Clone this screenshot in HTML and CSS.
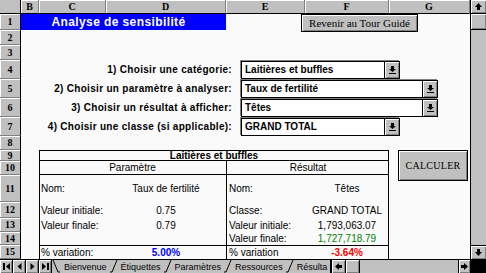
FILE: index.html
```html
<!DOCTYPE html>
<html lang="fr">
<head>
    <meta charset="UTF-8">
    <meta name="viewport" content="width=device-width, initial-scale=1.0">
    <title>Analyse de sensibilité</title>
    <link rel="stylesheet" href="styles.css">
</head>
<body>

<div class="window">
    <div class="main">
        <div class="sheet">
            <div class="corner"></div>
            <div class="col-heads">
                <div>B</div><div>C</div><div>D</div><div>E</div><div>F</div><div>G</div>
            </div>
            <div class="row-heads">
                <div>1</div><div>2</div><div>3</div><div>4</div><div>5</div>
                <div>6</div><div>7</div><div>8</div><div>9</div><div>10</div>
                <div>11</div><div>12</div><div>13</div><div>14</div><div>15</div>
            </div>

            <div class="title">Analyse de sensibilité</div>
            <button class="btn back-btn">Revenir au Tour Guidé</button>

            <div class="choices">
                <div class="choice">
                    <span class="ask">1) Choisir une catégorie:</span>
                    <div class="combo">
                        <span class="combo-text">Laitières et buffles</span>
                        <span class="combo-btn"><svg width="7" height="8" viewBox="0 0 7 8"><path d="M2 0h3v3h2L3.5 6 0 3h2z"/><rect y="7" width="7" height="1"/></svg></span>
                    </div>
                </div>
                <div class="choice">
                    <span class="ask">2) Choisir un paramètre à analyser:</span>
                    <div class="combo wide">
                        <span class="combo-text">Taux de fertilité</span>
                        <span class="combo-btn"><svg width="7" height="8" viewBox="0 0 7 8"><path d="M2 0h3v3h2L3.5 6 0 3h2z"/><rect y="7" width="7" height="1"/></svg></span>
                    </div>
                </div>
                <div class="choice">
                    <span class="ask">3) Choisir un résultat à afficher:</span>
                    <div class="combo wide">
                        <span class="combo-text">Têtes</span>
                        <span class="combo-btn"><svg width="7" height="8" viewBox="0 0 7 8"><path d="M2 0h3v3h2L3.5 6 0 3h2z"/><rect y="7" width="7" height="1"/></svg></span>
                    </div>
                </div>
                <div class="choice">
                    <span class="ask">4) Choisir une classe (si applicable):</span>
                    <div class="combo">
                        <span class="combo-text">GRAND TOTAL</span>
                        <span class="combo-btn"><svg width="7" height="8" viewBox="0 0 7 8"><path d="M2 0h3v3h2L3.5 6 0 3h2z"/><rect y="7" width="7" height="1"/></svg></span>
                    </div>
                </div>
            </div>

            <div class="tbl">
                <div class="tbl-title">Laitières et buffles</div>
                <div class="tbl-sub">Paramètre</div>
                <div class="tbl-sub split">Résultat</div>

                <div class="lbl">Nom:</div>
                <div class="val">Taux de fertilité</div>
                <div class="lbl split">Nom:</div>
                <div class="val">Têtes</div>

                <div class="lbl">Valeur initiale:</div>
                <div class="val">0.75</div>
                <div class="lbl split">Classe:</div>
                <div class="val">GRAND TOTAL</div>

                <div class="lbl">Valeur finale:</div>
                <div class="val">0.79</div>
                <div class="lbl split">Valeur initiale:</div>
                <div class="val">1,793,063.07</div>

                <div class="lbl"></div>
                <div class="val"></div>
                <div class="lbl split">Valeur finale:</div>
                <div class="val up">1,727,718.79</div>

                <div class="lbl last">% variation:</div>
                <div class="val last pct-up">5.00%</div>
                <div class="lbl split last">% variation</div>
                <div class="val last pct-down">-3.64%</div>
            </div>

            <button class="btn calc">CALCULER</button>
        </div>

        <div class="vscroll">
            <div class="sb-btn"><svg width="7" height="7" viewBox="0 0 7 7"><path d="M3.5 0L7 4H5v3H2V4H0z"/></svg></div>
            <div class="sb-thumb"></div>
            <div class="sb-track"></div>
            <div class="sb-btn"><svg width="7" height="7" viewBox="0 0 7 7"><path d="M2 0h3v3h2L3.5 7 0 3h2z"/></svg></div>
        </div>
    </div>

    <div class="tabbar">
        <div class="tab-nav">
            <div class="nav-btn"><svg width="7" height="7" viewBox="0 0 7 7"><rect width="2" height="7"/><path d="M7 0v7L3 3.5z"/></svg></div>
            <div class="nav-btn"><svg width="5" height="7" viewBox="0 0 5 7"><path d="M4.5 0v7L0.5 3.5z"/></svg></div>
            <div class="nav-btn"><svg width="5" height="7" viewBox="0 0 5 7"><path d="M0.5 0v7l4-3.5z"/></svg></div>
            <div class="nav-btn"><svg width="7" height="7" viewBox="0 0 7 7"><path d="M0 0v7l4-3.5z"/><rect x="5" width="2" height="7"/></svg></div>
        </div>
        <div class="tabs">
            <svg class="tab-sep" width="8" height="13" viewBox="0 0 8 13"><path d="M1 0L6 12H8" fill="none" stroke="#000"/></svg>
            <span class="tab first">Bienvenue</span>
            <svg class="tab-sep" width="8" height="13" viewBox="0 0 8 13"><path d="M0 12H2L7 0" fill="none" stroke="#000"/></svg>
            <span class="tab">Étiquettes</span>
            <svg class="tab-sep" width="8" height="13" viewBox="0 0 8 13"><path d="M0 12H2L7 0" fill="none" stroke="#000"/></svg>
            <span class="tab">Paramètres</span>
            <svg class="tab-sep" width="8" height="13" viewBox="0 0 8 13"><path d="M0 12H2L7 0" fill="none" stroke="#000"/></svg>
            <span class="tab">Ressources</span>
            <svg class="tab-sep" width="8" height="13" viewBox="0 0 8 13"><path d="M0 12H2L7 0" fill="none" stroke="#000"/></svg>
            <span class="tab">Résulta</span>
        </div>
        <div class="splitter"></div>
        <div class="hscroll">
            <div class="sb-btn"><svg width="7" height="7" viewBox="0 0 7 7"><path d="M0 3.5L4 0v2h3v3H4v2z"/></svg></div>
            <div class="sb-thumb"></div>
            <div class="sb-track"></div>
            <div class="sb-btn"><svg width="7" height="7" viewBox="0 0 7 7"><path d="M7 3.5L3 0v2H0v3h3v2z"/></svg></div>
        </div>
        <div class="bottom-corner"></div>
    </div>
</div>

</body>
</html>
```

FILE: styles.css
```css
* {
    margin: 0;
    padding: 0;
    box-sizing: border-box;
}

body {
    font-family: "Liberation Sans", Arial, sans-serif;
    font-size: 10px;
    color: #000;
    background: #c0c0c0;
    width: 486px;
    height: 273px;
    overflow: hidden;
}

.window {
    display: flex;
    flex-direction: column;
    width: 486px;
    height: 273px;
}

.main {
    display: flex;
    height: 259px;
}

/* feuille de calcul : colonnes A(en-tête) B..G */
.sheet {
    --rows: 16px 15px 15px 19px 19px 19px 19px 14px 11px 14px 27px 16px 14px 13px 14px;
    display: grid;
    grid-template-columns: 21px 18px 67px 120px 79px 84px 81px;
    grid-template-rows: 14px var(--rows);
    width: 470px;
    background: #fafafa;
}

.corner {
    grid-row: 1;
    grid-column: 1;
    background: #c0c0c0;
    border-right: 1px solid #000;
    border-bottom: 1px solid #000;
}

.col-heads {
    grid-row: 1;
    grid-column: 2 / 8;
    display: grid;
    grid-template-columns: 18px 67px 120px 79px 84px 81px;
}

.row-heads {
    grid-row: 2 / 17;
    grid-column: 1;
    display: grid;
    grid-template-rows: var(--rows);
}

.col-heads div,
.row-heads div {
    display: flex;
    align-items: center;
    justify-content: center;
    background: #c0c0c0;
    font-family: "Liberation Serif", "Times New Roman", serif;
    font-weight: bold;
    font-size: 10px;
    box-shadow: inset 1px 1px 0 #fff;
}

.col-heads div {
    border-right: 1px solid #808080;
    border-bottom: 1px solid #000;
}

.row-heads div {
    border-bottom: 1px solid #808080;
    border-right: 1px solid #000;
}

.title {
    grid-column: 2 / 5;
    grid-row: 2;
    display: flex;
    align-items: center;
    justify-content: center;
    padding-right: 10px;
    background: #0000ff;
    color: #fff;
    font-weight: bold;
    font-size: 12px;
    letter-spacing: 0.4px;
}

.btn {
    display: flex;
    align-items: center;
    justify-content: center;
    background: #c0c0c0;
    color: #000;
    border: 1px solid #000;
    box-shadow: inset 1px 1px 0 #fff, inset -1px -1px 0 #808080;
    font-family: "Liberation Serif", "Times New Roman", serif;
    font-size: 11px;
}

.back-btn {
    grid-column: 5 / 8;
    grid-row: 2 / 4;
    align-self: start;
    margin-left: 75px;
    width: 117px;
    height: 18px;
}

.calc {
    grid-column: 7;
    grid-row: 10 / 13;
    align-self: start;
    margin-left: 9px;
    width: 70px;
    height: 31px;
    font-size: 10px;
    letter-spacing: 0.3px;
}

.choices {
    grid-column: 3 / 8;
    grid-row: 5 / 9;
    display: grid;
    grid-template-rows: repeat(4, 19px);
}

.choice {
    display: flex;
    align-items: center;
    gap: 9px;
}

.ask {
    width: 193px;
    text-align: right;
    white-space: nowrap;
    font-weight: bold;
    letter-spacing: 0.3px;
}

.combo {
    display: flex;
    width: 159px;
    height: 18px;
    background: #fff;
    border: 1px solid #000;
    box-shadow: -1px -1px 0 #808080;
    font-weight: bold;
}

.combo.wide {
    width: 197px;
}

.combo-text {
    flex: 1;
    display: flex;
    align-items: center;
    padding-left: 3px;
}

.combo-btn {
    width: 15px;
    display: flex;
    align-items: center;
    justify-content: center;
    background: #c0c0c0;
    border-left: 1px solid #000;
    box-shadow: inset 1px 1px 0 #fff, inset -1px -1px 0 #808080;
}

/* tableau des résultats */
.tbl {
    grid-column: 3 / 7;
    grid-row: 10 / 17;
    display: grid;
    grid-template-columns: 67px 120px 79px 84px;
    grid-template-rows: 11px 14px 27px 16px 14px 13px 14px;
    box-shadow: inset 1px 1px 0 #000, inset -1px 0 0 #000;
}

.tbl div {
    display: flex;
    align-items: center;
    white-space: nowrap;
}

.tbl-title {
    grid-column: 1 / 5;
    justify-content: center;
    font-weight: bold;
    border-bottom: 1px solid #000;
}

.tbl .tbl-sub {
    grid-column: span 2;
    justify-content: center;
    border-bottom: 1px solid #000;
}

.tbl .split {
    border-left: 1px solid #000;
}

.lbl {
    padding-left: 2px;
}

.tbl .val {
    justify-content: center;
}

.tbl .last {
    border-top: 1px solid #000;
}

.up {
    color: #008000;
}

.pct-up {
    color: #0000ff;
    font-weight: bold;
}

.pct-down {
    color: #ff0000;
    font-weight: bold;
}

/* barres de défilement */
.vscroll {
    width: 16px;
    display: flex;
    flex-direction: column;
    background: #c0c0c0;
    border-left: 1px solid #000;
}

.sb-btn {
    flex: none;
    display: flex;
    align-items: center;
    justify-content: center;
    width: 100%;
    height: 14px;
    background: #c0c0c0;
    border-bottom: 1px solid #000;
    box-shadow: inset 1px 1px 0 #fff, inset -1px -1px 0 #808080;
}

.vscroll .sb-btn:last-child {
    border-bottom: none;
    border-top: 1px solid #000;
}

.sb-thumb {
    flex: none;
    height: 16px;
    background: #c0c0c0;
    border-bottom: 1px solid #000;
    box-shadow: inset 1px 1px 0 #fff, inset -1px -1px 0 #808080;
}

.sb-track {
    flex: 1;
    background: #c0c0c0;
}

.tabbar {
    display: flex;
    height: 14px;
    background: #c0c0c0;
    border-top: 1px solid #000;
}

.tab-nav {
    display: flex;
}

.nav-btn {
    width: 13px;
    display: flex;
    align-items: center;
    justify-content: center;
    border-right: 1px solid #000;
    box-shadow: inset 1px 1px 0 #fff, inset -1px -1px 0 #808080;
}

.tabs {
    display: flex;
    align-items: center;
    width: 278px;
    overflow: hidden;
    font-size: 9px;
    white-space: nowrap;
}

.tab {
    padding: 0 3px;
}

.tab.first {
    padding-left: 4px;
}

.tab-sep {
    flex: none;
}

.splitter {
    width: 2px;
    background: #000;
}

.hscroll {
    flex: 1;
    display: flex;
}

.hscroll .sb-btn {
    width: 14px;
    height: 100%;
    border-bottom: none;
    border-right: 1px solid #000;
}

.hscroll .sb-thumb {
    width: 14px;
    height: 100%;
    border-bottom: none;
    border-right: 1px solid #000;
}

.hscroll .sb-btn:last-child {
    width: 12px;
    border-right: none;
    border-left: 1px solid #000;
}

.bottom-corner {
    width: 16px;
    background: #000;
}
```
